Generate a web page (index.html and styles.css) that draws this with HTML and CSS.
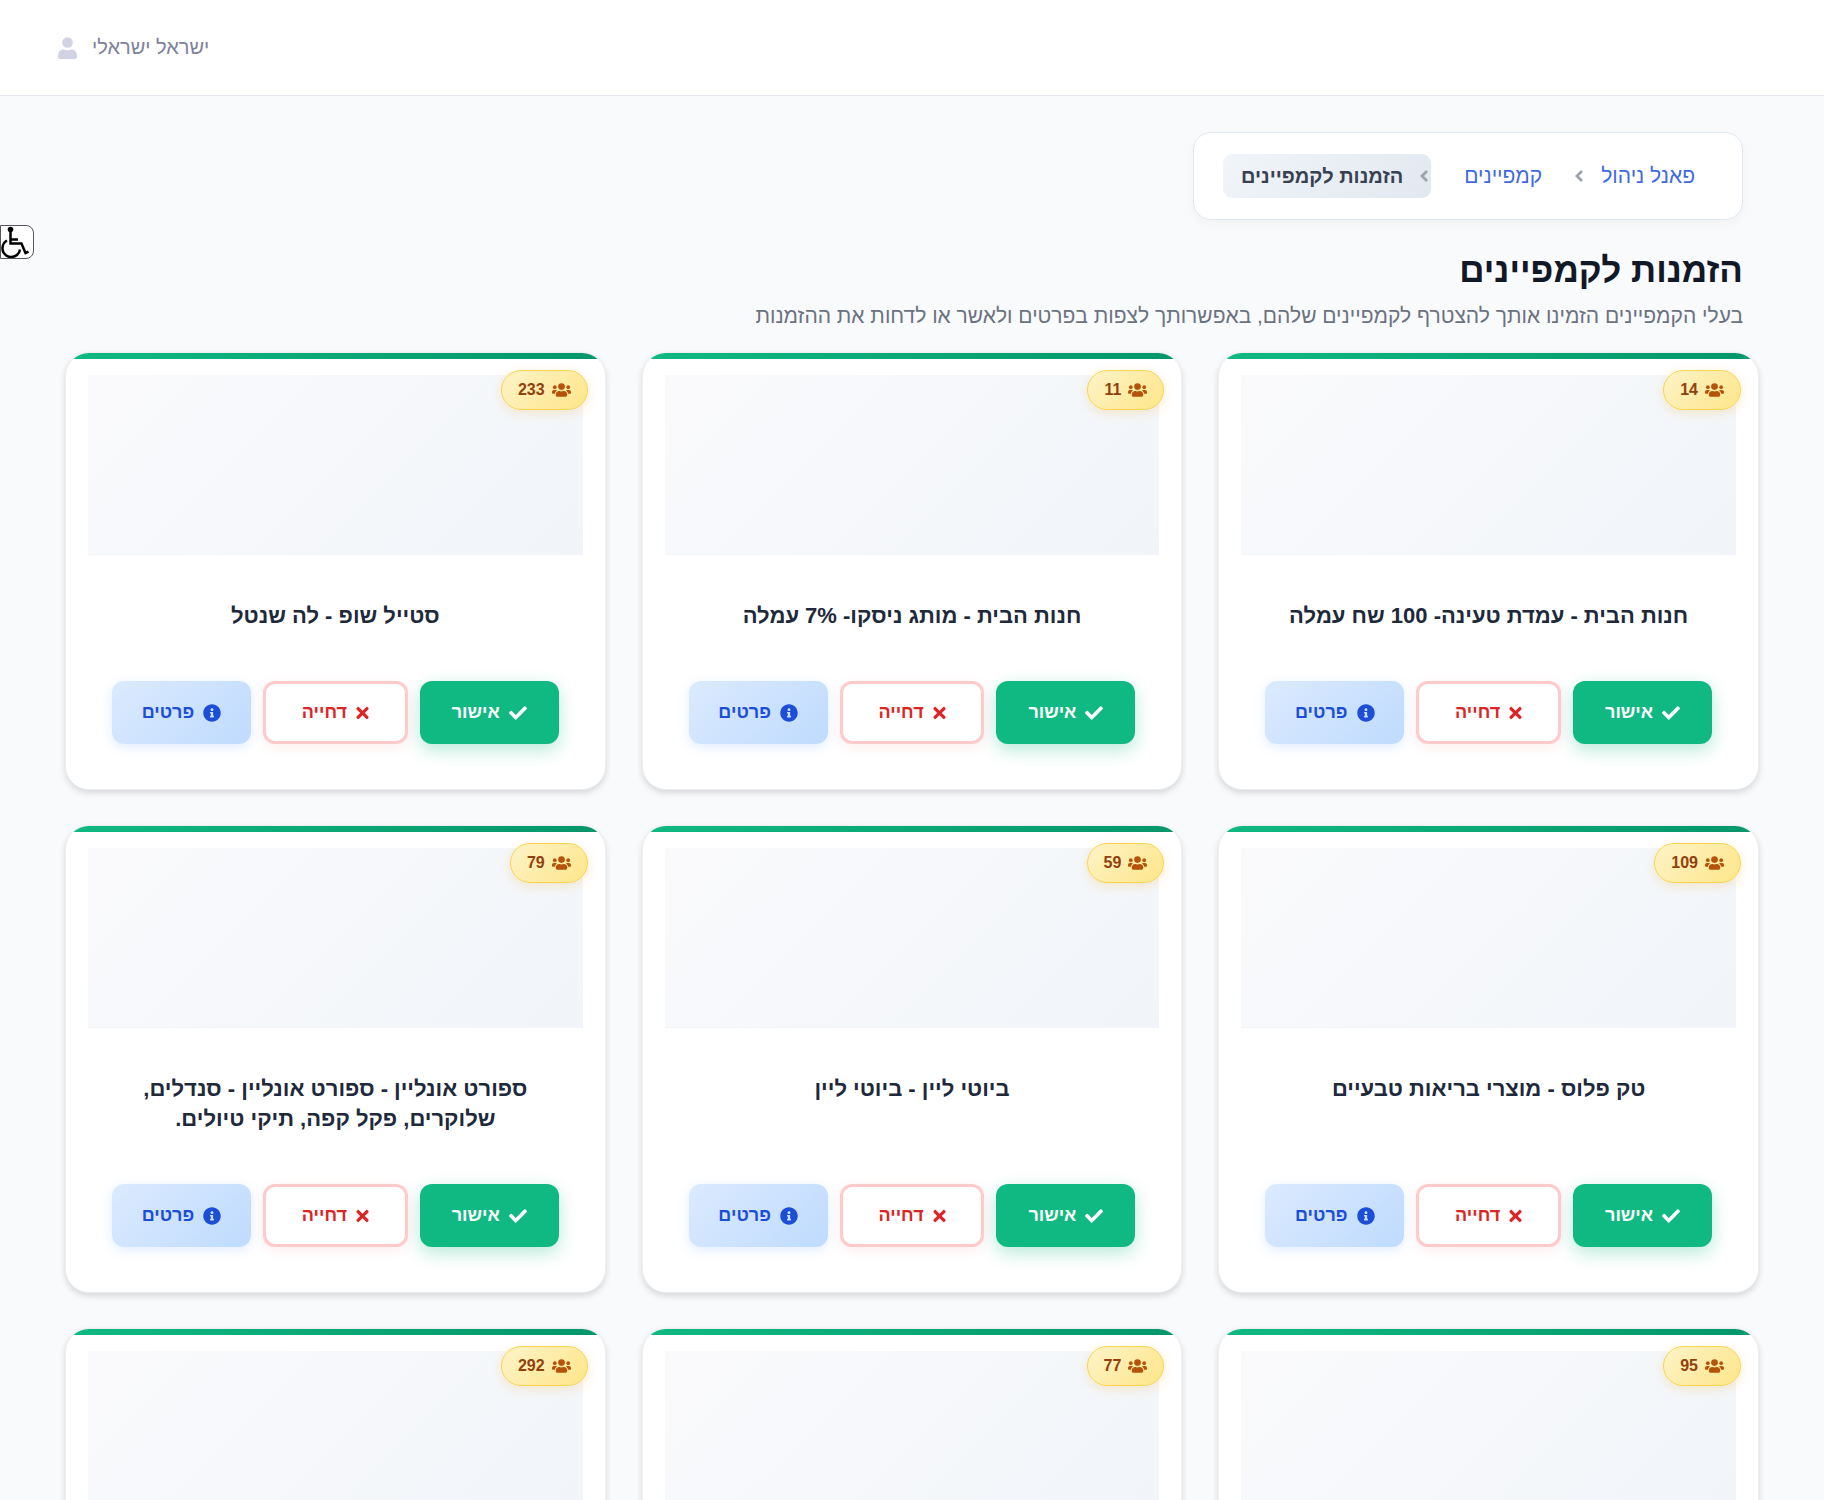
FILE: index.html
```
<!DOCTYPE html>
<html lang="he" dir="rtl">

<head>
    <meta charset="UTF-8">
    <title>הזמנות לקמפיינים</title>
    <link rel="stylesheet" href="styles.css">
</head>

<body>
    <svg class="sprite" aria-hidden="true">
        <symbol id="i-users" viewBox="0 0 640 512">
            <circle cx="94" cy="160" r="62" />
            <circle cx="546" cy="160" r="62" />
            <circle cx="320" cy="140" r="112" />
            <path d="M396 288h-8c-21 10-44 16-68 16s-48-6-68-16h-8c-64 0-116 52-116 115v29c0 26 21 48 48 48h288c26 0 48-22 48-48v-29c0-63-52-115-116-115zM172 275c-11-12-27-19-44-19H64c-35 0-64 29-64 64v32c0 18 14 32 32 32h66c6-47 35-87 74-109zM576 256h-64c-17 0-33 7-45 19 40 22 69 62 75 109h66c18 0 32-14 32-32v-32c0-35-29-64-64-64z" />
        </symbol>
        <symbol id="i-check" viewBox="0 0 512 512">
            <path d="M173.898 439.404l-166.400-166.400c-9.997-9.997-9.997-26.206 0-36.204l36.203-36.204c9.997-9.998 26.207-9.998 36.204 0L192 312.690 432.095 72.596c9.997-9.997 26.207-9.997 36.204 0l36.203 36.204c9.997 9.997 9.997 26.206 0 36.204l-294.400 294.401c-9.998 9.997-26.207 9.997-36.204-.001z" />
        </symbol>
        <symbol id="i-times" viewBox="0 0 352 512">
            <path d="M242.720 256l100.070-100.070c12.280-12.280 12.280-32.190 0-44.480l-22.240-22.240c-12.280-12.280-32.190-12.280-44.480 0L176 189.280 75.930 89.210c-12.280-12.280-32.190-12.280-44.480 0L9.210 111.450c-12.280 12.280-12.280 32.190 0 44.480L109.280 256 9.210 356.070c-12.280 12.280-12.280 32.190 0 44.480l22.240 22.240c12.280 12.280 32.200 12.280 44.480 0L176 322.720l100.070 100.070c12.280 12.280 32.200 12.280 44.480 0l22.240-22.240c12.280-12.280 12.280-32.190 0-44.480L242.720 256z" />
        </symbol>
        <symbol id="i-info" viewBox="0 0 512 512">
            <path d="M256 8C119.043 8 8 119.083 8 256c0 136.997 111.043 248 248 248s248-111.003 248-248C504 119.083 392.957 8 256 8zm0 110c23.196 0 42 18.804 42 42s-18.804 42-42 42-42-18.804-42-42 18.804-42 42-42zm56 254c0 6.627-5.373 12-12 12h-88c-6.627 0-12-5.373-12-12v-24c0-6.627 5.373-12 12-12h12v-64h-12c-6.627 0-12-5.373-12-12v-24c0-6.627 5.373-12 12-12h64c6.627 0 12 5.373 12 12v100h12c6.627 0 12 5.373 12 12v24z" />
        </symbol>
        <symbol id="i-arrow" viewBox="0 0 8 12">
            <path d="M7 1L2 6l5 5" fill="none" stroke="currentColor" stroke-width="2.800" />
        </symbol>
    </svg>

    <header class="header">
        <a href="#" class="user">
            <span>ישראל ישראלי</span>
            <svg class="user_icon" viewBox="0 0 19 22">
                <circle cx="9.500" cy="5.500" r="5.300" />
                <path d="M0 19c0-4 2.500-6.500 5-6.500 1.500 0 2.500.8 4.500.8s3-.8 4.500-.8c2.500 0 5 2.500 5 6.500 0 2-.5 3-2 3H2c-1.500 0-2-1-2-3z" />
            </svg>
        </a>
    </header>

    <button class="access" type="button" aria-label="נגישות">
        <svg viewBox="0 0 28 32">
            <circle cx="9.500" cy="3.500" r="2.800" />
            <path d="M9.500 4v13.500h11l4 9.500 3-1.500M9 13.500h8M6 14.500a8.800 8.800 0 1 0 13 9" />
        </svg>
    </button>

    <main class="main">
        <nav class="crumbs">
            <a href="#" class="crumb">פאנל ניהול</a>
            <svg class="arrow"><use href="#i-arrow" /></svg>
            <a href="#" class="crumb crumb_mid">קמפיינים</a>
            <span class="crumb crumb_active"><svg class="arrow"><use href="#i-arrow" /></svg>הזמנות לקמפיינים</span>
        </nav>
        <h1 class="title">הזמנות לקמפיינים</h1>
        <p class="subtitle">בעלי הקמפיינים הזמינו אותך להצטרף לקמפיינים שלהם, באפשרותך לצפות בפרטים ולאשר או לדחות את ההזמנות</p>
    </main>

    <section class="cards" id="cards"></section>

    <script>
        var cards = [
            { count: 14, name: "חנות הבית - עמדת טעינה- 100 שח עמלה" },
            { count: 11, name: "חנות הבית - מותג ניסקו- 7% עמלה" },
            { count: 233, name: "סטייל שופ - לה שנטל" },
            { count: 109, name: "טק פלוס - מוצרי בריאות טבעיים" },
            { count: 59, name: "ביוטי ליין - ביוטי ליין" },
            { count: 79, name: "ספורט אונליין - ספורט אונליין - סנדלים, שלוקרים, פקל קפה, תיקי טיולים." },
            { count: 95 },
            { count: 77 },
            { count: 292 }
        ];

        function icon(name) {
            return '<svg class="icon icon_' + name + '"><use href="#i-' + name + '"/></svg>';
        }

        //没有名称的卡片只显示图片
        function body(name) {
            if (!name) {
                return "";
            }
            return '<div class="card_body">' +
                '<h2 class="card_name">' + name + '</h2>' +
                '<div class="actions">' +
                '<button type="button" class="btn btn_ok">' + icon("check") + 'אישור</button>' +
                '<button type="button" class="btn btn_no">' + icon("times") + 'דחייה</button>' +
                '<button type="button" class="btn btn_info">' + icon("info") + 'פרטים</button>' +
                '</div></div>';
        }

        document.querySelector("#cards").innerHTML = cards.map(function (v) {
            return '<article class="card">' +
                '<div class="badge">' + icon("users") + '<span>' + v.count + '</span></div>' +
                '<div class="picture"></div>' +
                body(v.name) +
                '</article>';
        }).join("");
    </script>
</body>

</html>
```
FILE: styles.css
```
* {
    padding: 0;
    margin: 0;
    box-sizing: border-box;
}

body {
    background-color: #f9fafc;
    font-family: "Liberation Sans", Arial, sans-serif;
    color: #1e293b;
}

a {
    text-decoration: none;
}

.sprite {
    display: none;
}

/*顶部*/
.header {
    height: 96px;
    padding: 0 58px;
    display: flex;
    align-items: center;
    justify-content: flex-end;
    background-color: #fff;
    border-bottom: 1px solid #e6e8ef;
}

.user {
    display: flex;
    align-items: center;
    gap: 15px;
    font-size: 20px;
    color: #7e8299;
}

.user_icon {
    width: 19px;
    height: 22px;
    fill: #d1d3e4;
}

.access {
    position: absolute;
    left: 0;
    top: 225px;
    width: 34px;
    height: 34px;
    background-color: #fff;
    border: 1px solid #55565c;
    border-radius: 0 8px 8px 0;
    direction: ltr;
    text-align: left;
}

.access svg {
    display: block;
    width: 28px;
    height: 32px;
}

.access path {
    fill: none;
    stroke: #000;
    stroke-width: 2.5;
}

.main {
    padding: 36px 81px 0;
}

/*面包屑*/
.crumbs {
    width: fit-content;
    padding: 21px 29px;
    display: flex;
    align-items: center;
    background-color: #fff;
    border: 1px solid #e2e8f0;
    border-radius: 18px;
    box-shadow: 0 4px 12px rgba(0, 0, 0, 0.04);
    font-size: 21px;
}

.crumb {
    padding: 0 18px;
    line-height: 44px;
    color: #4169e1;
}

.crumb_mid {
    margin: 0 15px;
}

.crumb_active {
    padding: 0 3px 0 18px;
    display: flex;
    align-items: center;
    gap: 17px;
    border-radius: 9px;
    background: linear-gradient(135deg, #f1f5f9, #e2e8f0);
    color: #374151;
    font-size: 20px;
    font-weight: bold;
}

.arrow {
    width: 8px;
    height: 12px;
    color: #9ca3af;
}

.title {
    margin-top: 27px;
    font-size: 35px;
    line-height: 46px;
    color: #111827;
}

.subtitle {
    margin-top: 8px;
    font-size: 21px;
    line-height: 30px;
    color: #6b7280;
}

/*卡片*/
.cards {
    padding: 21px 65px 36px;
    display: grid;
    grid-template-columns: repeat(3, 1fr);
    gap: 35px 36px;
}

.card {
    position: relative;
    padding: 22px;
    overflow: hidden;
    background-color: #fff;
    border: 1px solid #eceef1;
    border-radius: 24px;
    box-shadow: 0 3px 6px rgba(0, 0, 0, 0.14);
    display: flex;
    flex-direction: column;
}

.card::before {
    content: "";
    position: absolute;
    top: 0;
    left: 0;
    right: 0;
    height: 6px;
    background: linear-gradient(90deg, #10b981, #059669);
}

.picture {
    height: 180px;
    background: linear-gradient(135deg, #fafafc, #f1f5f9);
    border-bottom: 1px solid #f1f5f9;
}

.badge {
    position: absolute;
    top: 17px;
    right: 17px;
    height: 40px;
    padding: 0 16px;
    display: flex;
    align-items: center;
    gap: 7px;
    font-size: 16px;
    font-weight: bold;
    color: #92400e;
    background: linear-gradient(135deg, #fef3c7, #fde68a);
    border: 1px solid #fcd34d;
    border-radius: 20px;
    box-shadow: 0 3px 12px rgba(245, 158, 11, 0.2);
}

.card_body {
    flex: 1;
    padding: 46px 24px 23px;
    display: flex;
    flex-direction: column;
}

.card_name {
    flex: 1;
    font-size: 22px;
    line-height: 30px;
    text-align: center;
}

.actions {
    margin-top: 50px;
    display: flex;
    gap: 12px;
}

.btn {
    flex: 1;
    height: 63px;
    padding: 0 16px;
    display: flex;
    align-items: center;
    justify-content: center;
    gap: 9px;
    border: none;
    border-radius: 12px;
    font-family: inherit;
    font-size: 18px;
    font-weight: bold;
}

.btn_ok {
    color: #fff;
    background-color: #10b981;
    box-shadow: 0 6px 18px rgba(16, 185, 129, 0.3);
}

.btn_no {
    color: #dc2626;
    background-color: #fff;
    border: 3px solid #fecaca;
    box-shadow: 0 3px 12px rgba(239, 68, 68, 0.1);
}

.btn_info {
    color: #1d4ed8;
    background: linear-gradient(135deg, #dbeafe, #bfdbfe);
    box-shadow: 0 3px 12px rgba(59, 130, 246, 0.15);
}

.icon {
    width: 18px;
    height: 18px;
    fill: currentColor;
}

.icon_times {
    width: 13px;
}

.icon_users {
    width: 19px;
    height: 16px;
    color: #b45309;
}
```
